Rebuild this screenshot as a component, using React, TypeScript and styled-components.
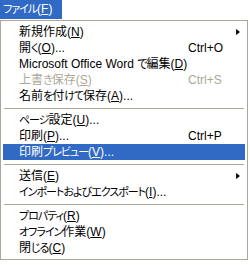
import React from 'react';
import styled, { createGlobalStyle } from 'styled-components';

const GlobalStyle = createGlobalStyle`
  html, body {
    margin: 0;
    padding: 0;
    background: #ffffff;
  }
  body {
    font-family: "Liberation Sans", "Noto Sans CJK JP", sans-serif;
    font-size: 12px;
    font-feature-settings: "palt" 1;
  }
`;

const Page = styled.div`
  width: 250px;
  height: 265px;
  background: #ffffff;
  display: flex;
  flex-direction: column;
  align-items: flex-start;
`;

const MenuTitle = styled.div`
  height: 19px;
  width: 62px;
  padding-left: 3px;
  box-sizing: border-box;
  background: #316ac5;
  color: #ffffff;
  line-height: 19px;
  white-space: nowrap;
  overflow: hidden;
  margin-bottom: 1px;
`;

const Menu = styled.div`
  width: 248px;
  box-sizing: border-box;
  border: 1px solid #aca899;
  background: #ffffff;
  padding: 3px 2px 3px 2px;
  display: flex;
  flex-direction: column;
`;

const Item = styled.div<{ $active?: boolean; $disabled?: boolean }>`
  position: relative;
  height: 16px;
  display: flex;
  align-items: center;
  justify-content: space-between;
  padding: 0 17px 0 16px;
  white-space: nowrap;
  line-height: 16px;
  background: ${(p) => (p.$active ? '#316ac5' : 'transparent')};
  color: ${(p) => (p.$active ? '#ffffff' : p.$disabled ? '#aca899' : '#000000')};
`;

// kana in the old UI font are much narrower than in Noto
const Kana = styled.span`
  font-size: 11px;
  letter-spacing: -1px;
`;

const Shortcut = styled.span`
  min-width: 40px;
`;

const Arrow = styled.span`
  position: absolute;
  right: 5px;
  top: 5px;
  width: 0;
  height: 0;
  border-top: 3.5px solid transparent;
  border-bottom: 3.5px solid transparent;
  border-left: 4px solid #000000;
`;

const Separator = styled.div`
  height: 8px;
  display: flex;
  align-items: center;
  padding: 0 1px;
  &::after {
    content: '';
    flex: 1;
    height: 1px;
    background: #aca899;
  }
`;

type Entry =
  | { sep: true }
  | {
      sep?: false;
      label: string;
      key: string;
      dots?: boolean;
      shortcut?: string;
      sub?: boolean;
      active?: boolean;
      disabled?: boolean;
    };

const entries: Entry[] = [
  { label: '新規作成', key: 'N', sub: true },
  { label: '開く', key: 'O', dots: true, shortcut: 'Ctrl+O' },
  { label: 'Microsoft Office Word で編集', key: 'D' },
  { label: '上書き保存', key: 'S', shortcut: 'Ctrl+S', disabled: true },
  { label: '名前を付けて保存', key: 'A', dots: true },
  { sep: true },
  { label: 'ページ設定', key: 'U', dots: true },
  { label: '印刷', key: 'P', dots: true, shortcut: 'Ctrl+P' },
  { label: '印刷プレビュー', key: 'V', dots: true, active: true },
  { sep: true },
  { label: '送信', key: 'E', sub: true },
  { label: 'インポートおよびエクスポート', key: 'I', dots: true },
  { sep: true },
  { label: 'プロパティ', key: 'R' },
  { label: 'オフライン作業', key: 'W' },
  { label: '閉じる', key: 'C' },
];

function Label({ text }: { text: string }) {
  const parts = text.split(/([\u3040-\u30ff]+)/).filter(Boolean);
  return (
    <>
      {parts.map((p, i) =>
        /^[\u3040-\u30ff]+$/.test(p) ? <Kana key={i}>{p}</Kana> : <span key={i}>{p}</span>
      )}
    </>
  );
}

export default function App(): JSX.Element {
  return (
    <Page>
      <GlobalStyle />
      <MenuTitle>
        <Label text="ファイル" />(<u>F</u>)
      </MenuTitle>
      <Menu>
        {entries.map((e, i) =>
          e.sep ? (
            <Separator key={i} />
          ) : (
            <Item key={i} $active={e.active} $disabled={e.disabled}>
              <span>
                <Label text={e.label} />(<u>{e.key}</u>){e.dots ? '...' : ''}
              </span>
              {e.shortcut && <Shortcut>{e.shortcut}</Shortcut>}
              {e.sub && <Arrow />}
            </Item>
          )
        )}
      </Menu>
    </Page>
  );
}
